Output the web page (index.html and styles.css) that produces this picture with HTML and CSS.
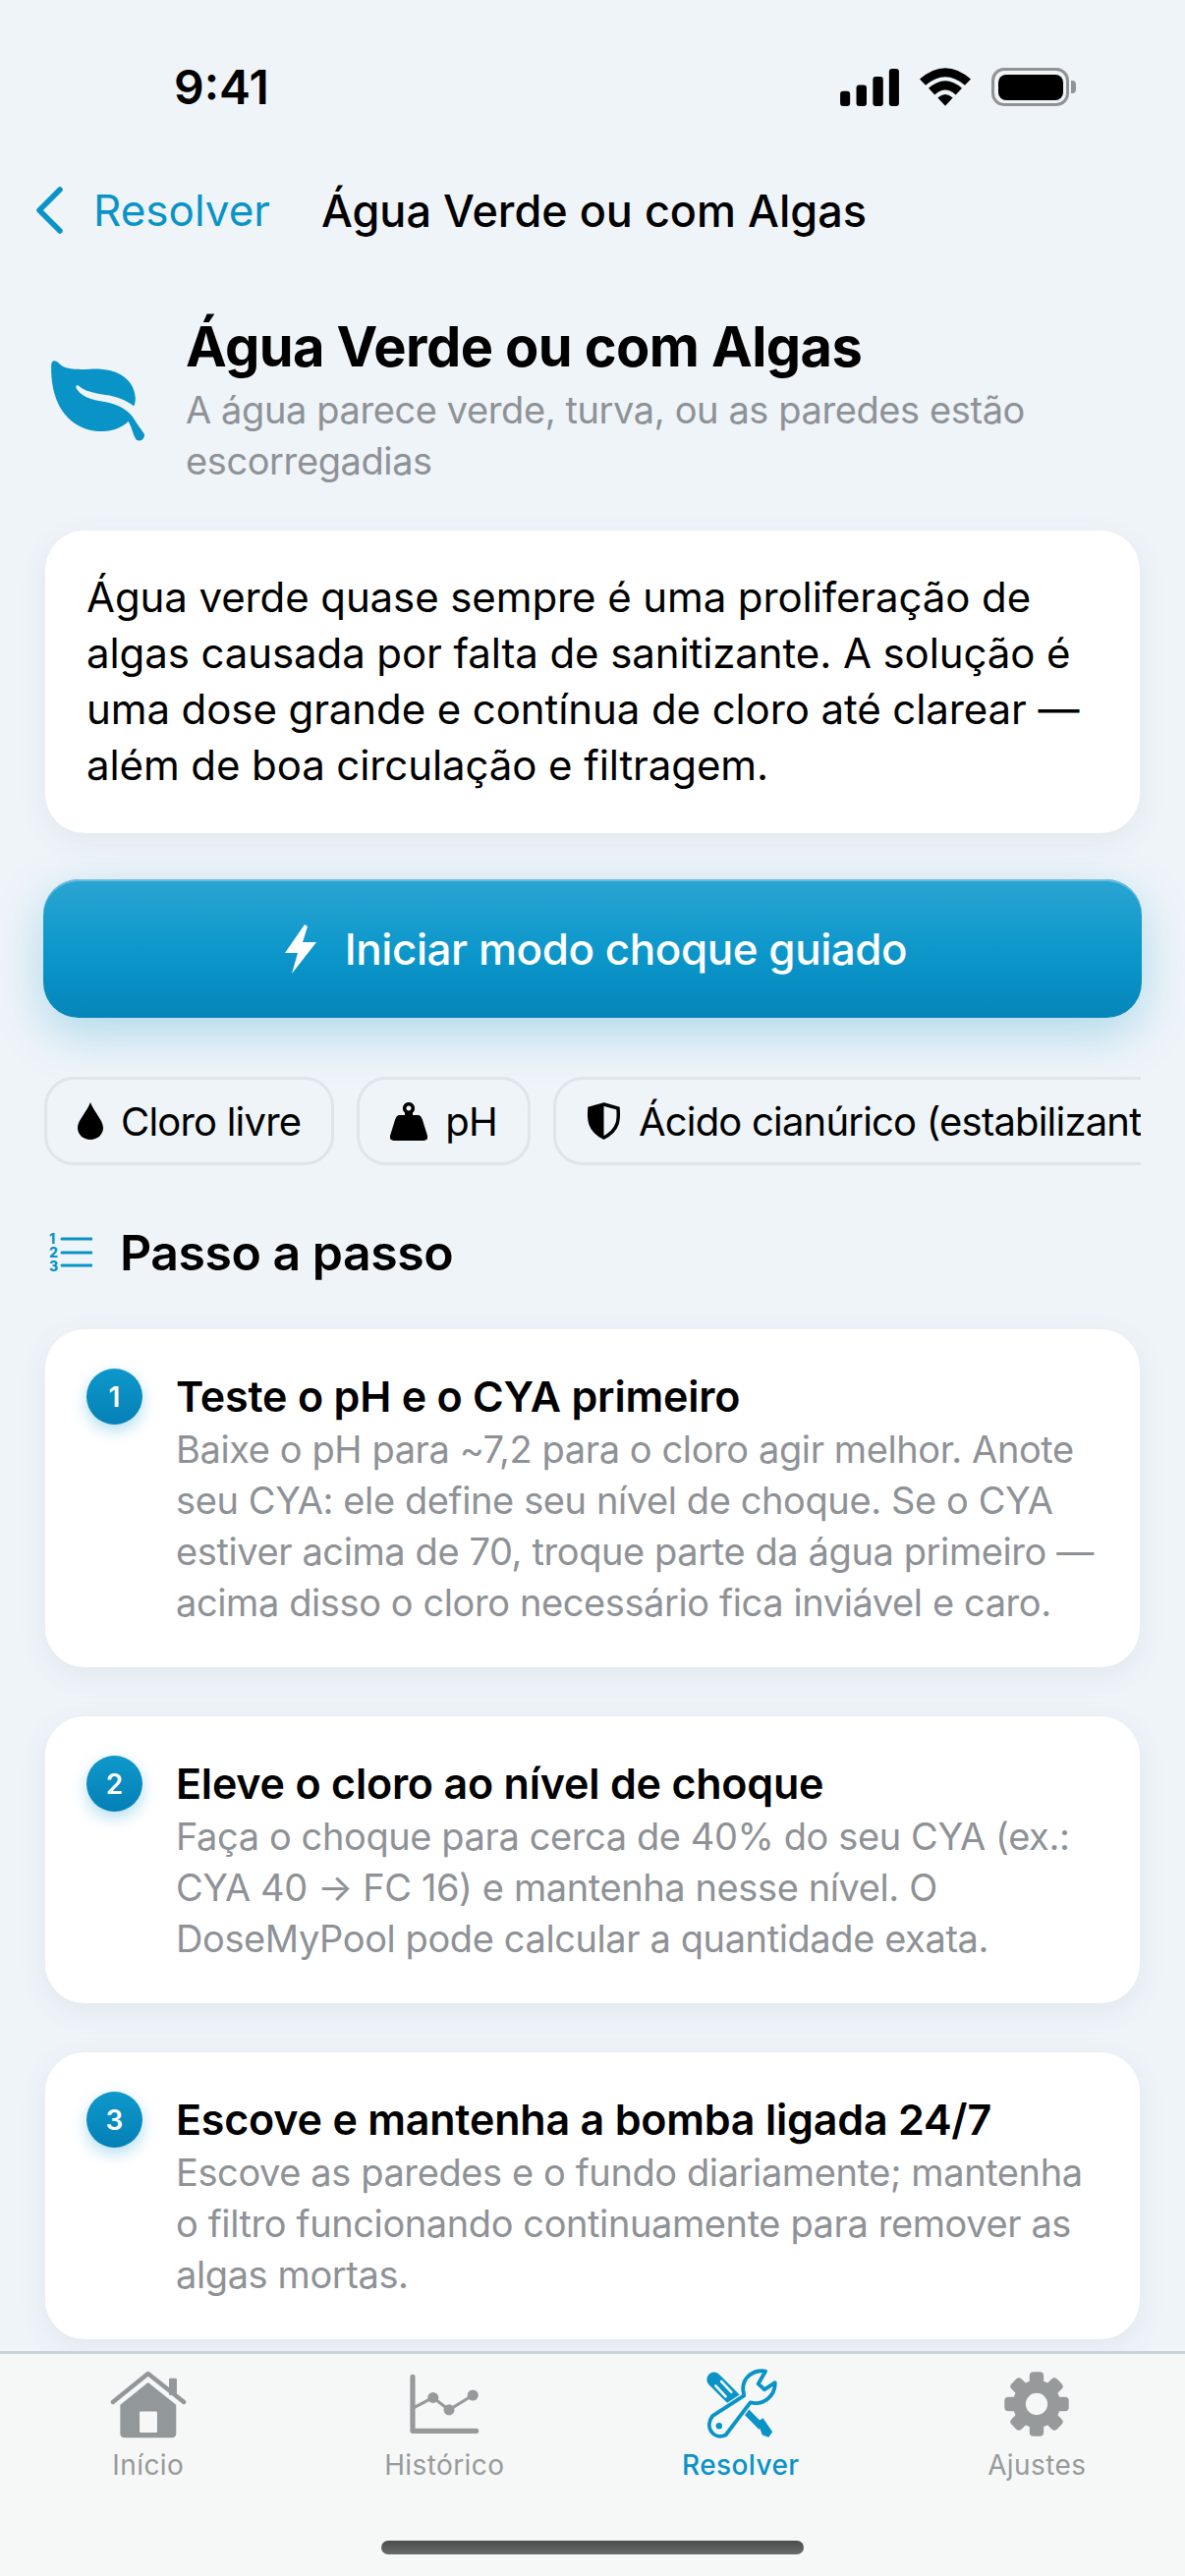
FILE: index.html
```html
<!DOCTYPE html>
<html lang="pt-BR">
<head>
  <meta charset="UTF-8" />
  <meta name="viewport" content="width=device-width, initial-scale=1.0"/>
  <title>Água Verde ou com Algas</title>
  <link rel="stylesheet" href="styles.css">
</head>
<body>
  <div class="app">

    <!-- status bar -->
    <div class="status">
      <span class="time">9:41</span>
      <div class="status-icons">
        <svg class="ic-signal" viewBox="108 88 178 113">
          <rect x="108" y="156" width="30" height="45" rx="9"/>
          <rect x="157" y="137" width="31" height="64" rx="9"/>
          <rect x="207" y="112" width="31" height="89" rx="9"/>
          <rect x="256" y="88" width="30" height="113" rx="9"/>
        </svg>
        <svg class="ic-wifi" viewBox="350 86 156 116">
          <path d="M350 120 Q428 52 506 120 L488 139 Q428 88 368 139Z"/>
          <path d="M377 148 Q428 102 479 148 L460 168 Q428 138 396 168Z"/>
          <path d="M405 177 Q428 156 451 177 L428 202Z"/>
        </svg>
        <div class="battery"><div class="battery-fill"></div></div>
        <div class="battery-nub"></div>
      </div>
    </div>

    <!-- nav -->
    <div class="nav">
      <svg class="ic-back" viewBox="0 0 31 50"><path d="M26 4 L5 25 L26 46"/></svg>
      <span class="nav-back">Resolver</span>
      <span class="nav-title">Água Verde ou com Algas</span>
    </div>

    <div class="main">
      <div class="header">
        <svg class="ic-leaf" viewBox="62 70 296 255">
          <path d="M68 90 C68 74 80 72 92 85 C108 103 145 104 185 102 C260 97 320 125 325 190 C325 200 324 208 320 215 C295 195 265 185 235 181 C195 175 170 170 150 152 C142 150 142 158 148 166 C165 190 200 197 235 203 C270 210 300 225 318 250 C330 270 342 285 352 300 C355 315 340 325 328 318 C318 305 315 280 303 262 C270 295 215 298 175 285 C105 262 65 190 68 90Z"/>
        </svg>
        <div class="header-text">
          <h1>Água Verde ou com Algas</h1>
          <p>A água parece verde, turva, ou as paredes estão escorregadias</p>
        </div>
      </div>

      <div class="intro">
        Água verde quase sempre é uma proliferação de algas causada por falta de sanitizante. A solução é uma dose grande e contínua de cloro até clarear — além de boa circulação e filtragem.
      </div>

      <div class="shock-btn">
        <svg class="ic-bolt" viewBox="0 0 34 50"><path d="M21 0 L1 29 L14 29 L8 50 L33 18 L19 18 L24 2Z"/></svg>
        <span>Iniciar modo choque guiado</span>
      </div>

      <div class="chips">
        <div class="chip">
          <svg class="ic-chip" viewBox="0 0 26 38"><path d="M13 0 C16 9 26 18 26 26 C26 33 20 38 13 38 C6 38 0 33 0 26 C0 18 10 9 13 0Z"/></svg>
          Cloro livre
        </div>
        <div class="chip">
          <svg class="ic-weight" viewBox="0 0 38 39"><path d="M19 0 a6 6 0 0 1 4 10.500 L23 13 L28 13 C31 13 32 15 33 18 L38 34 C39 37 37 39 34 39 L4 39 C1 39 -1 37 0 34 L5 18 C6 15 7 13 10 13 L15 13 L15 10.500 A6 6 0 0 1 19 0Z M19 3.500 a2.500 2.500 0 1 0 .01 0Z" fill-rule="evenodd"/></svg>
          pH
        </div>
        <div class="chip">
          <svg class="ic-shield" viewBox="0 0 35 38"><path d="M17.500 2 L32 6 C33 17 33 28 17.500 36 C2 28 2 17 3 6Z" fill="none" stroke="#000" stroke-width="3.500"/><path d="M17.500 2 L3 6 C2 17 2 28 17.500 36Z"/></svg>
          Ácido cianúrico (estabilizante)
        </div>
      </div>

      <div class="section-head">
        <svg class="ic-list" viewBox="0 -4 44 50">
          <text x="0" y="12">1</text>
          <text x="0" y="26">2</text>
          <text x="0" y="40">3</text>
          <path d="M13 7 H43 M13 21 H43 M13 34 H43"/>
        </svg>
        <h2>Passo a passo</h2>
      </div>

      <div class="step">
        <div class="step-num">1</div>
        <div class="step-body">
          <h3>Teste o pH e o CYA primeiro</h3>
          <p>Baixe o pH para ~7,2 para o cloro agir melhor. Anote seu CYA: ele define seu nível de choque. Se o CYA estiver acima de 70, troque parte da água primeiro — acima disso o cloro necessário fica inviável e caro.</p>
        </div>
      </div>

      <div class="step">
        <div class="step-num">2</div>
        <div class="step-body">
          <h3>Eleve o cloro ao nível de choque</h3>
          <p>Faça o choque para cerca de 40% do seu CYA (ex.: CYA 40 → FC 16) e mantenha nesse nível. O DoseMyPool pode calcular a quantidade exata.</p>
        </div>
      </div>

      <div class="step">
        <div class="step-num">3</div>
        <div class="step-body">
          <h3>Escove e mantenha a bomba ligada 24/7</h3>
          <p>Escove as paredes e o fundo diariamente; mantenha o filtro funcionando continuamente para remover as algas mortas.</p>
        </div>
      </div>
    </div>

    <!-- tab bar -->
    <div class="tabbar">
      <div class="tabs">
        <div class="tab">
          <svg class="tab-icon" viewBox="95 62 232 208">
            <path d="M106 160 L210 76 L316 160" fill="none" stroke="#92979a" stroke-width="13" stroke-linecap="round" stroke-linejoin="round"/>
            <rect x="272" y="90" width="23" height="50" rx="3" fill="#92979a"/>
            <path d="M128 168 L210 102 L293 168 V252 Q293 265 280 265 H141 Q128 265 128 252Z" fill="#92979a"/>
            <rect x="185" y="188" width="52" height="62" rx="3" fill="#f6f8f8"/>
          </svg>
          <span>Início</span>
        </div>
        <div class="tab">
          <svg class="tab-icon" viewBox="1000 62 225 208">
            <path d="M1020 86 V245 H1207" fill="none" stroke="#979a9b" stroke-width="15" stroke-linecap="round" stroke-linejoin="round"/>
            <path d="M1025 176 L1080 147 L1127 183 L1197 140" fill="none" stroke="#979a9b" stroke-width="9"/>
            <circle cx="1080" cy="147" r="16" fill="#979a9b"/>
            <circle cx="1127" cy="183" r="16" fill="#979a9b"/>
            <circle cx="1197" cy="140" r="16" fill="#979a9b"/>
          </svg>
          <span>Histórico</span>
        </div>
        <div class="tab tab-active">
          <svg class="tab-icon" viewBox="165 58 230 224">
            <path d="M195 92 L262 159" fill="none" stroke="#0993c7" stroke-width="46" stroke-linecap="round"/>
            <path d="M262 159 L345 242" fill="none" stroke="#0993c7" stroke-width="22"/>
            <path d="M332 226 L350 214 L380 258 L368 275 L348 268Z" fill="#0993c7"/>
            <path d="M200 112 L232 146 M218 98 L250 132" fill="none" stroke="#f6f8f8" stroke-width="8" stroke-linecap="round"/>
            <path d="M358 66 C320 60 285 85 287 125 L290 143 L190 208 C165 240 190 285 232 268 L310 165 C350 175 390 145 388 102 L355 124 L335 106Z" fill="#f6f8f8" stroke="#f6f8f8" stroke-width="20" stroke-linejoin="round"/>
            <path d="M358 66 C320 60 285 85 287 125 L290 143 L190 208 C165 240 190 285 232 268 L310 165 C350 175 390 145 388 102 L355 124 L335 106Z" fill="#f6f8f8" stroke="#0993c7" stroke-width="12" stroke-linejoin="round"/>
            <circle cx="211" cy="239" r="10" fill="#0993c7"/>
          </svg>
          <span>Resolver</span>
        </div>
        <div class="tab">
          <svg class="tab-icon" viewBox="-55 -55 110 110">
            <circle r="27" fill="none" stroke="#979a9b" stroke-width="20"/>
            <g fill="#979a9b">
              <rect x="-11" y="-50" width="22" height="24" rx="6"/>
              <rect x="-11" y="-50" width="22" height="24" rx="6" transform="rotate(45)"/>
              <rect x="-11" y="-50" width="22" height="24" rx="6" transform="rotate(90)"/>
              <rect x="-11" y="-50" width="22" height="24" rx="6" transform="rotate(135)"/>
              <rect x="-11" y="-50" width="22" height="24" rx="6" transform="rotate(180)"/>
              <rect x="-11" y="-50" width="22" height="24" rx="6" transform="rotate(225)"/>
              <rect x="-11" y="-50" width="22" height="24" rx="6" transform="rotate(270)"/>
              <rect x="-11" y="-50" width="22" height="24" rx="6" transform="rotate(315)"/>
            </g>
          </svg>
          <span>Ajustes</span>
        </div>
      </div>
      <div class="home-bar"></div>
    </div>

  </div>
</body>
</html>
```

FILE: styles.css
```css
:root {
  --bg: #eff4f9;
  --blue: #0993c7;
  --gray: #8e9296;
  --text: #000;
}

* {
  box-sizing: border-box;
}

body {
  margin: 0;
  background: var(--bg);
  color: var(--text);
  font-family: Inter, "Liberation Sans", sans-serif;
}

.app {
  width: 1206px;
  height: 2622px;
  display: flex;
  flex-direction: column;
  overflow: hidden;
}

/* status bar */
.status {
  height: 177px;
  flex: none;
  display: flex;
  align-items: center;
  justify-content: space-between;
  padding: 0 111px 0 177px;
}

.time {
  font-size: 48px;
  font-weight: 600;
}

.status-icons {
  display: flex;
  align-items: center;
}

.ic-signal {
  width: 60px;
  height: 38px;
  margin-right: 21px;
}

.ic-wifi {
  width: 52px;
  height: 39px;
  margin-right: 21px;
}

.battery {
  width: 79px;
  height: 39px;
  border: 3.5px solid #8f9396;
  border-radius: 13px;
  padding: 3.5px;
}

.battery-fill {
  height: 100%;
  background: #000;
  border-radius: 8px;
}

.battery-nub {
  width: 5px;
  height: 13px;
  margin-left: 2px;
  background: #8f9396;
  border-radius: 0 4px 4px 0;
}

/* nav */
.nav {
  height: 74px;
  flex: none;
  display: flex;
  align-items: center;
  padding-left: 35px;
}

.ic-back {
  width: 31px;
  height: 50px;
  fill: none;
  stroke: var(--blue);
  stroke-width: 5.500;
  stroke-linecap: round;
  stroke-linejoin: round;
}

.nav-back {
  margin-left: 29px;
  font-size: 44px;
  color: var(--blue);
}

.nav-title {
  margin-left: 52px;
  font-size: 45px;
  font-weight: 500;
}

/* content */
.main {
  flex: 1;
  min-height: 0;
  overflow: hidden;
  padding: 68px 46px 0;
}

.header {
  display: flex;
  align-items: center;
  padding-left: 4px;
  gap: 40px;
  margin-bottom: 45px;
}

.ic-leaf {
  width: 99px;
  height: 85px;
  flex: none;
  fill: var(--blue);
}

.header-text h1 {
  margin: 0 0 4px;
  font-size: 56px;
  line-height: 68px;
  font-weight: 700;
  letter-spacing: -0.6px;
}

.header-text p {
  margin: 0;
  font-size: 38px;
  line-height: 52px;
  letter-spacing: -0.4px;
  color: var(--gray);
}

.intro {
  height: 308px;
  padding: 39px 42px;
  background: #fff;
  border-radius: 40px;
  font-size: 42px;
  line-height: 57px;
  letter-spacing: -0.1px;
  box-shadow: 0 8px 30px rgba(60, 90, 120, 0.08);
}

.shock-btn {
  height: 141px;
  margin: 47px -2px 60px;
  padding-left: 6px;
  display: flex;
  align-items: center;
  justify-content: center;
  gap: 28px;
  color: #fff;
  font-size: 44px;
  font-weight: 500;
  letter-spacing: -0.45px;
  border-radius: 36px;
  background: linear-gradient(#2aa5d2, #0b96ca 55%, #0586b9);
  box-shadow: inset 0 2px 0 #6cbbe0, 0 16px 50px rgba(0, 147, 201, 0.28);
}

.ic-bolt {
  width: 34px;
  height: 50px;
  fill: #fff;
}

.chips {
  display: flex;
  gap: 23px;
  margin: 0 -1px;
  overflow: hidden;
}

.chip {
  flex: none;
  height: 90px;
  display: flex;
  align-items: center;
  gap: 18px;
  padding: 0 31px;
  font-size: 40px;
  letter-spacing: -0.8px;
  background: #eef4f8;
  border: 3px solid #dfe5e9;
  border-radius: 30px;
}

.ic-chip {
  width: 26px;
  height: 38px;
}

.ic-weight {
  width: 38px;
  height: 39px;
}

.ic-shield {
  width: 35px;
  height: 38px;
}

.section-head {
  display: flex;
  align-items: center;
  gap: 28px;
  margin: 55px 0 44px 4px;
}

.ic-list {
  width: 44px;
  height: 50px;
  fill: var(--blue);
  flex: none;
}

.ic-list text {
  font-size: 14px;
  font-weight: 800;
  font-family: Inter, sans-serif;
}

.ic-list path {
  fill: none;
  stroke: var(--blue);
  stroke-width: 3;
  stroke-linecap: round;
}

.section-head h2 {
  margin: 0;
  font-size: 50px;
  line-height: 68px;
  font-weight: 600;
  letter-spacing: -0.5px;
}

.step {
  display: flex;
  gap: 34px;
  padding: 40px 42px;
  margin-bottom: 50px;
  background: #fff;
  border-radius: 40px;
  box-shadow: 0 8px 30px rgba(60, 90, 120, 0.08);
}

.step-num {
  width: 57px;
  height: 57px;
  flex: none;
  display: flex;
  align-items: center;
  justify-content: center;
  color: #fff;
  font-size: 28px;
  font-weight: 600;
  border-radius: 50%;
  background: linear-gradient(#0e98cb, #0580b6);
  box-shadow: 0 6px 16px rgba(0, 147, 201, 0.3);
}

.step-body h3 {
  margin: 0;
  font-size: 43px;
  line-height: 56px;
  font-weight: 600;
  letter-spacing: -0.2px;
}

.step-body p {
  margin: 0;
  font-size: 38px;
  line-height: 52px;
  letter-spacing: -0.4px;
  color: var(--gray);
}

/* tab bar */
.tabbar {
  height: 229px;
  flex: none;
  display: flex;
  flex-direction: column;
  background: #f6f8f8;
  border-top: 3px solid #c8d3de;
}

.tabs {
  display: grid;
  grid-template-columns: repeat(4, 1fr);
  padding-top: 15px;
}

.tab {
  display: flex;
  flex-direction: column;
  align-items: center;
  gap: 10px;
  font-size: 28px;
  line-height: 32px;
  letter-spacing: 0.4px;
  color: #979a9b;
}

.tab-active {
  color: var(--blue);
  font-weight: 500;
}

.tab-icon {
  height: 72px;
  width: 80px;
}

.home-bar {
  width: 430px;
  height: 14px;
  margin: auto auto 22px;
  border-radius: 7px;
  background: linear-gradient(#4c4c4c, #6a6a6a);
}
```
